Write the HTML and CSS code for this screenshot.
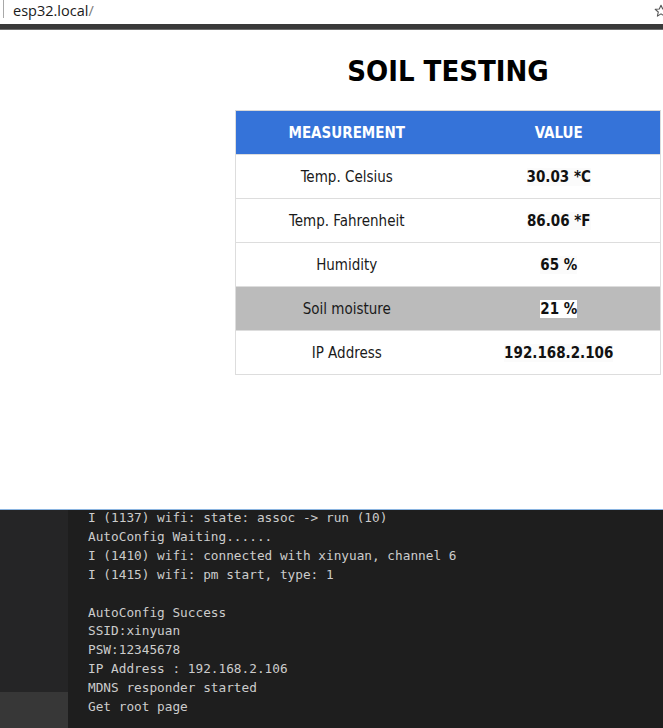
FILE: index.html
```html
<!DOCTYPE html>
<html lang="en">
<head>
<meta charset="utf-8">
<title>esp32.local</title>
<link rel="stylesheet" href="styles.css">
</head>
<body>
<header class="addressbar">
  <span class="divider"></span>
  <span class="url">esp32.local<span class="slash">/</span></span>
  <svg class="star" width="14" height="14" viewBox="0 0 14 14" aria-hidden="true">
    <path d="M7 1.2 L8.7 5 L12.8 5.3 L9.7 8 L10.6 12.1 L7 9.9 L3.4 12.1 L4.3 8 L1.2 5.3 L5.3 5 Z" fill="none" stroke="#555" stroke-width="1.1" stroke-linejoin="round"/>
  </svg>
</header>
<div class="toolbar-edge"></div>

<main class="page">
  <div class="content">
    <h1 class="title">SOIL TESTING</h1>
    <table class="readings">
      <thead>
        <tr><th>MEASUREMENT</th><th>VALUE</th></tr>
      </thead>
      <tbody>
        <tr><td>Temp. Celsius</td><td><span class="val">30.03 *C</span></td></tr>
        <tr><td>Temp. Fahrenheit</td><td><span class="val">86.06 *F</span></td></tr>
        <tr><td>Humidity</td><td><span class="val">65 %</span></td></tr>
        <tr class="hl"><td>Soil moisture</td><td><span class="val white">21 %</span></td></tr>
        <tr><td>IP Address</td><td><span class="val">192.168.2.106</span></td></tr>
      </tbody>
    </table>
  </div>
</main>

<section class="terminal">
  <aside class="side">
    <div class="side-top"></div>
    <div class="side-bottom"></div>
  </aside>
  <pre class="log">I (1137) wifi: state: assoc -&gt; run (10)
AutoConfig Waiting......
I (1410) wifi: connected with xinyuan, channel 6
I (1415) wifi: pm start, type: 1

AutoConfig Success
SSID:xinyuan
PSW:12345678
IP Address : 192.168.2.106
MDNS responder started
Get root page</pre>
</section>
</body>
</html>
```
FILE: styles.css
```css
* { box-sizing: border-box; }
html, body {
  margin: 0;
  padding: 0;
  width: 663px;
  height: 728px;
  overflow: hidden;
  background: #ffffff;
}
body {
  display: flex;
  flex-direction: column;
}

.addressbar {
  height: 24px;
  flex: none;
  display: flex;
  align-items: flex-start;
  position: relative;
  background: #ffffff;
  font-family: "Open Sans", "Noto Sans", sans-serif;
}
.divider {
  width: 1px;
  height: 18px;
  margin-left: 3px;
  background: #a8a8a8;
}
.url {
  margin-left: 9px;
  margin-top: 1px;
  font-size: 14.5px;
  line-height: 19px;
  color: #1a1a1a;
  letter-spacing: 0;
}
.slash { color: #7a7a7a; }
.star {
  position: absolute;
  left: 654px;
  top: 4px;
}

.toolbar-edge {
  height: 6px;
  flex: none;
  background: #3a3a3a;
  border-bottom: 1px solid #6e6e6e;
}

.page {
  height: 479px;
  flex: none;
  background: #ffffff;
  font-family: "DejaVu Sans Condensed", "DejaVu Sans", sans-serif;
  color: #111111;
}
.content {
  width: 426px;
  margin-left: 235px;
  display: flex;
  flex-direction: column;
}
.title {
  margin: 16px 0 0 0;
  font-size: 29px;
  line-height: 50px;
  font-weight: bold;
  text-align: center;
  color: #000;
  height: 64px;
}
.readings {
  width: 426px;
  border-collapse: collapse;
  font-size: 15px;
  table-layout: fixed;
  border: 1px solid #dddddd;
}
.readings th,
.readings td {
  height: 44px;
  padding: 0;
  text-align: center;
  border: none;
  border-top: 1px solid #dddddd;
}
.readings th:first-child,
.readings td:first-child { width: 222px; }
.readings th {
  background: #3573d9;
  color: #ffffff;
  font-weight: bold;
  border-top-color: #d8d8d8;
}
.readings td { color: #1a1a1a; }
.val {
  font-weight: bold;
  background: #fbfbfb;
  color: #111;
}
.val.white { background: #ffffff; }
.readings tr.hl td { background: #bbbbbb; }

.terminal {
  flex: 1;
  display: flex;
  border-top: 1px solid #8ab4e0;
  background: #1e1e1e;
  min-height: 0;
}
.side {
  width: 68px;
  flex: none;
  display: flex;
  flex-direction: column;
}
.side-top { height: 182px; background: #252526; }
.side-bottom { flex: 1; background: #373737; }
.log {
  margin: -1px 0 0 0;
  padding: 0 0 0 20px;
  font-family: "DejaVu Sans Mono", "Liberation Mono", monospace;
  font-size: 12.75px;
  line-height: 18.9px;
  color: #cccccc;
  white-space: pre;
}
```
